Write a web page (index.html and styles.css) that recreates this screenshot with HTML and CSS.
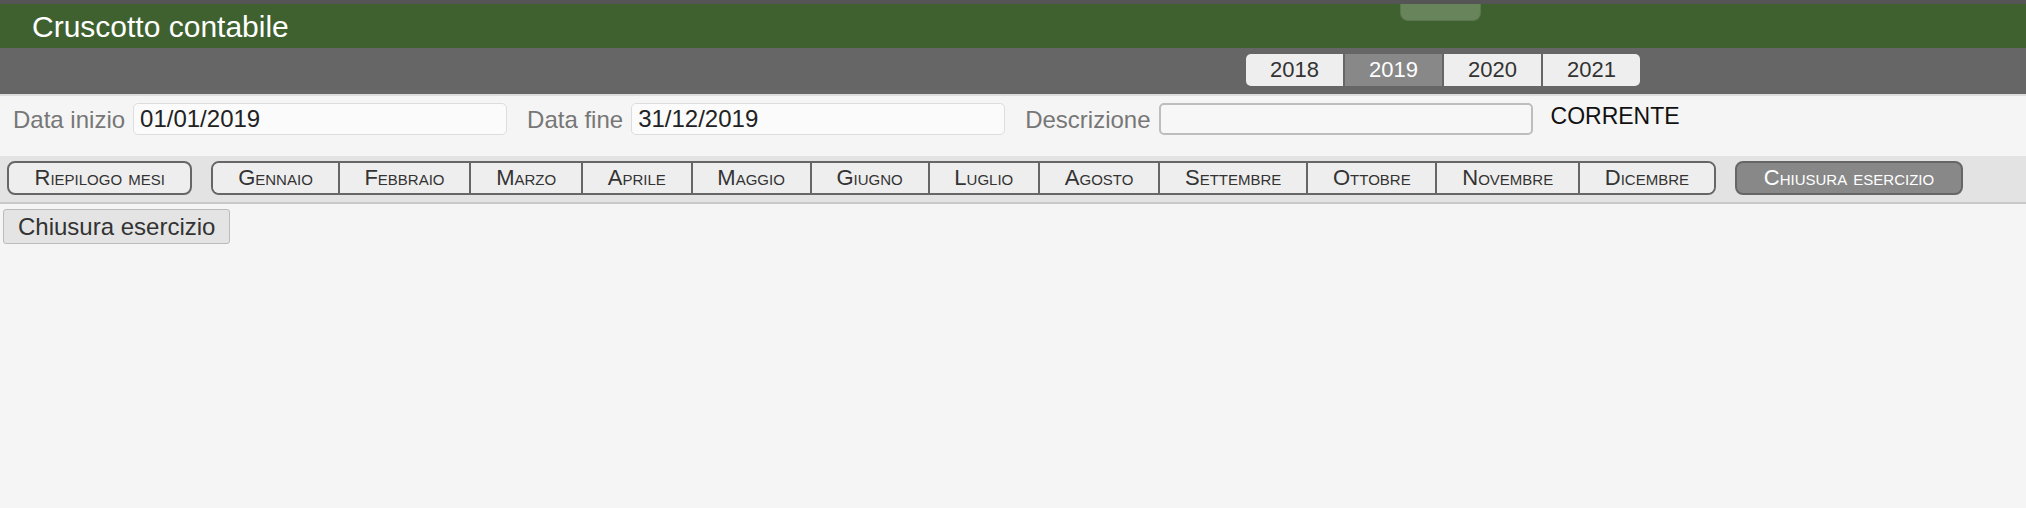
FILE: index.html
```html
<!DOCTYPE html>
<html lang="it">
    <head>
        <meta charset="UTF-8" />
        <meta name="viewport" content="width=device-width, initial-scale=1" />
        <link rel="stylesheet" href="styles.css">
        <title>Cruscotto contabile</title>
    </head>

    <body>
        <header class="app-header">
            <div class="title-bar">
                <h1>Cruscotto contabile</h1>
                <div class="pull-tab"></div>
            </div>
            <nav class="year-bar">
                <ul class="years">
                    <li>2018</li>
                    <li class="active">2019</li>
                    <li>2020</li>
                    <li>2021</li>
                </ul>
            </nav>
        </header>

        <section class="filters">
            <label class="field">
                <span>Data inizio</span>
                <input type="text" value="01/01/2019" />
            </label>
            <label class="field">
                <span>Data fine</span>
                <input type="text" value="31/12/2019" />
            </label>
            <label class="field">
                <span>Descrizione</span>
                <input class="outlined" type="text" value="" />
            </label>
            <span class="status">CORRENTE</span>
        </section>

        <section class="menu-bar">
            <button class="pill">Riepilogo mesi</button>
            <ul class="months">
                <li>Gennaio</li>
                <li>Febbraio</li>
                <li>Marzo</li>
                <li>Aprile</li>
                <li>Maggio</li>
                <li>Giugno</li>
                <li>Luglio</li>
                <li>Agosto</li>
                <li>Settembre</li>
                <li>Ottobre</li>
                <li>Novembre</li>
                <li>Dicembre</li>
            </ul>
            <button class="pill dark">Chiusura esercizio</button>
        </section>

        <main class="content">
            <button class="plain">Chiusura esercizio</button>
        </main>
    </body>
</html>
```

FILE: styles.css
```css
body {
    margin: 0;
    background-color: #f5f5f5;
    font-family: "Liberation Sans", Arial, sans-serif;
    color: #333;
}

/* header */
.title-bar {
    position: relative;
    box-sizing: border-box;
    display: flex;
    align-items: center;
    height: 48px;
    padding: 2px 0 0 32px;
    border-top: 4px solid #555;
    background-color: #3e612f;
}
.title-bar h1 {
    margin: 0;
    font-size: 30px;
    font-weight: normal;
    color: #fff;
}
.pull-tab {
    position: absolute;
    left: 1400px;
    top: 0;
    width: 79px;
    height: 16px;
    background-color: #68845b;
    border: 1px solid #5b7650;
    border-top: none;
    border-radius: 0 0 8px 8px;
}

.year-bar {
    box-sizing: border-box;
    height: 48px;
    padding: 6px 0 0 1246px;
    background-color: #666;
    border-bottom: 2px solid #ddd;
}
.years {
    display: flex;
    gap: 2px;
    margin: 0;
    padding: 0;
    list-style: none;
}
.years li {
    width: 97px;
    height: 32px;
    line-height: 32px;
    text-align: center;
    font-size: 22px;
    color: #333;
    background-color: #eee;
}
.years li:first-child {
    border-radius: 5px 0 0 5px;
}
.years li:last-child {
    border-radius: 0 5px 5px 0;
}
.years li.active {
    background-color: #888;
    color: #fff;
}

/* filters */
.filters {
    box-sizing: border-box;
    display: flex;
    align-items: center;
    height: 60px;
    padding: 7px 0 21px 13px;
}
.field {
    display: flex;
    align-items: center;
    gap: 8px;
    margin-right: 20px;
    font-size: 24px;
    color: #777;
}
.field span {
    padding-top: 2px;
}
.field input {
    box-sizing: border-box;
    width: 374px;
    height: 32px;
    padding: 0 6px;
    border: 1px solid #ddd;
    border-radius: 5px;
    background-color: #fbfbfb;
    font-family: inherit;
    font-size: 24px;
    color: #222;
}
.field input.outlined {
    border: 2px solid #bdbdbd;
    background-color: #f7f7f7;
}
.status {
    align-self: flex-start;
    margin-left: -2px;
    font-size: 23px;
    color: #111;
}

/* month menu */
.menu-bar {
    box-sizing: border-box;
    display: flex;
    align-items: flex-start;
    gap: 19px;
    height: 48px;
    padding: 5px 0 0 7px;
    background-color: #e3e3e3;
    border-bottom: 2px solid #c8c8c8;
}
.pill {
    height: 34px;
    padding: 0 25.5px;
    border: 2px solid #666;
    border-radius: 8px;
    background-color: #eee;
    font-family: inherit;
    font-size: 22px;
    font-variant: small-caps;
    color: #333;
}
.pill.dark {
    padding: 0 27px;
    background-color: #888;
    color: #fff;
}
.months {
    display: flex;
    margin: 0;
    padding: 0;
    list-style: none;
    border: 2px solid #666;
    border-radius: 8px;
    overflow: hidden;
}
.months li {
    padding: 0 24.8px;
    line-height: 30px;
    font-size: 22px;
    font-variant: small-caps;
    background-color: #eee;
}
.months li + li {
    border-left: 2px solid #666;
}

/* content */
.content {
    padding: 5px 3px;
}
.plain {
    height: 35px;
    padding: 0 14px;
    border: 1px solid #bbb;
    border-radius: 3px;
    background-color: #e4e4e4;
    font-family: inherit;
    font-size: 24px;
    color: #333;
}
```
